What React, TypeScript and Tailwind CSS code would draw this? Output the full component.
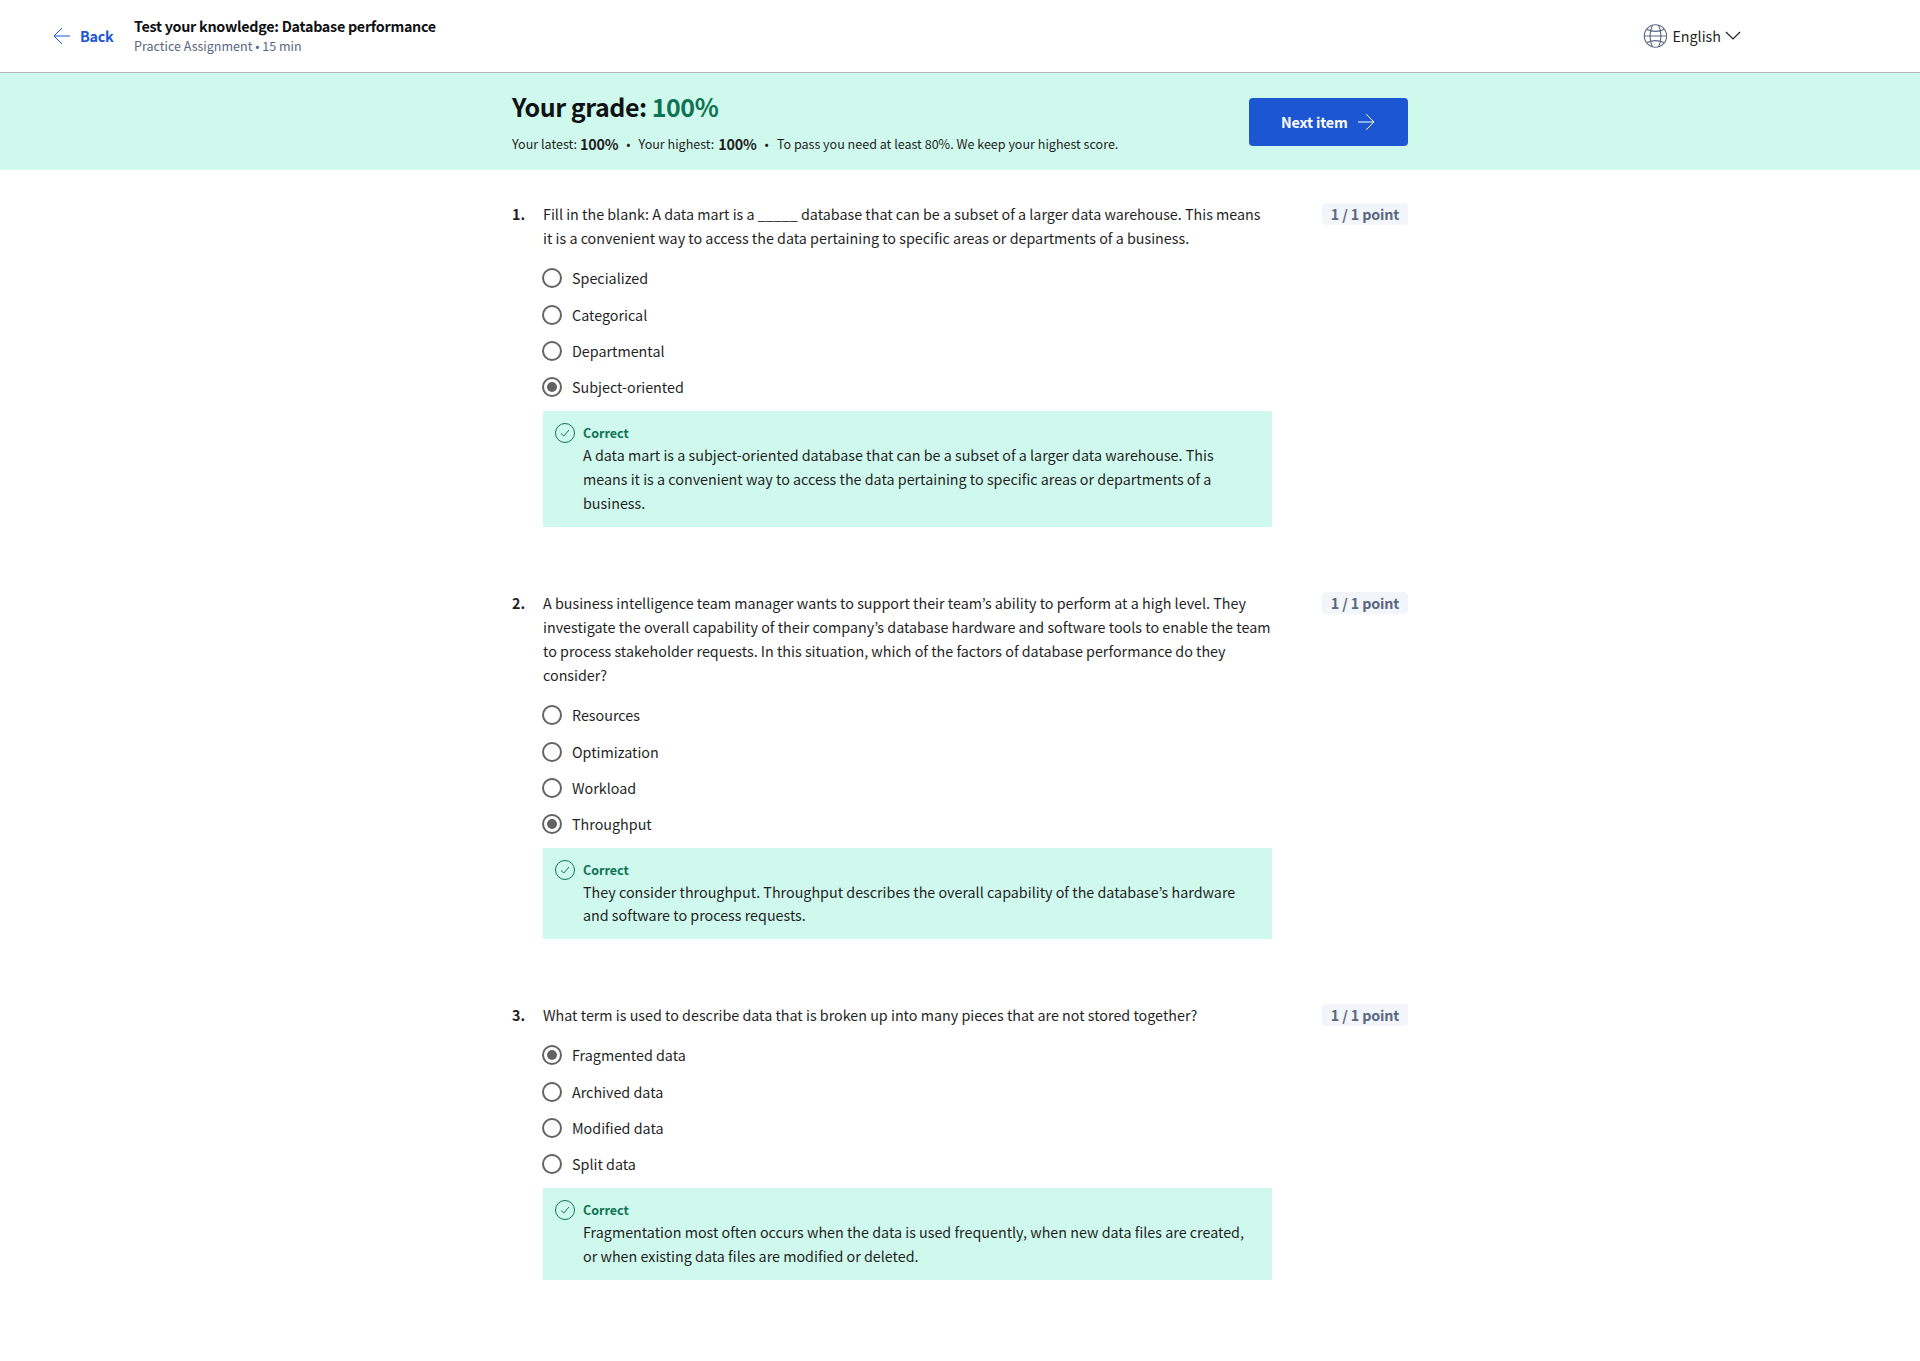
const questions = [
  {
    text: ['Fill in the blank: A data mart is a _____ database that can be a subset of a larger data warehouse. This means', 'it is a convenient way to access the data pertaining to specific areas or departments of a business.'],
    options: ['Specialized', 'Categorical', 'Departmental', 'Subject-oriented'],
    picked: 3,
    feedback: ['A data mart is a subject-oriented database that can be a subset of a larger data warehouse. This', 'means it is a convenient way to access the data pertaining to specific areas or departments of a', 'business.'],
    feedbackHeight: 'h-[116px]',
    feedbackLeading: 'leading-6',
  },
  {
    text: ['A business intelligence team manager wants to support their team’s ability to perform at a high level. They', 'investigate the overall capability of their company’s database hardware and software tools to enable the team', 'to process stakeholder requests. In this situation, which of the factors of database performance do they', 'consider?'],
    options: ['Resources', 'Optimization', 'Workload', 'Throughput'],
    picked: 3,
    feedback: ['They consider throughput. Throughput describes the overall capability of the database’s hardware', 'and software to process requests.'],
    feedbackHeight: 'h-[91px]',
    feedbackLeading: 'leading-[23px]',
  },
  {
    text: ['What term is used to describe data that is broken up into many pieces that are not stored together?'],
    options: ['Fragmented data', 'Archived data', 'Modified data', 'Split data'],
    picked: 0,
    feedback: ['Fragmentation most often occurs when the data is used frequently, when new data files are created,', 'or when existing data files are modified or deleted.'],
    feedbackHeight: 'h-[92px]',
    feedbackLeading: 'leading-6',
  },
];

function Lines({ lines }: { lines: string[] }) {
  return (
    <>
      {lines.map((l) => (
        <p key={l} className="whitespace-nowrap">{l}</p>
      ))}
    </>
  );
}

function Radio({ checked }: { checked: boolean }) {
  return (
    <span className="flex size-5 shrink-0 items-center justify-center rounded-full border-2 border-[#636363]">
      {checked && <span className="size-2.5 rounded-full bg-[#636363]" />}
    </span>
  );
}

export default function App() {
  return (
    <div className="h-[1361px] overflow-hidden bg-white font-['Noto_Sans_CJK_KR',sans-serif] text-[14.32px] leading-6 text-[#1f1f1f]">
      <header className="flex h-[73px] items-center border-b border-[#b5b5b5] pl-[53px] pr-[179px]">
        <svg width="18" height="18" viewBox="0 0 18 18" fill="none" stroke="#1d56d3" className="shrink-0">
          <path d="M9 1L1 9l8 8M1 9h16" />
        </svg>
        <span className="ml-[9px] w-[54px] font-bold tracking-[-0.25px] text-[#1d56d3]">Back</span>
        <div className="flex flex-col">
          <h1 className="h-5 whitespace-nowrap font-bold leading-5 tracking-[-0.27px] text-[#0f1114]">Test your knowledge: Database performance</h1>
          <span className="h-5 whitespace-nowrap text-[12.53px] leading-5 text-[#5b6780]">Practice Assignment • 15 min</span>
        </div>
        <div className="ml-auto flex items-center">
          <svg width="24" height="24" viewBox="0 0 24 24" fill="none" stroke="#5b6780" strokeWidth="1.1">
            <circle cx="12.500" cy="12" r="11.200" />
            <path d="M1.300 12h22.400M9.500 1.200C6.200 7.500 6.200 16.500 9.500 22.800M15.500 1.200c3.300 6.300 3.300 15.300 0 21.600M4 5.500c5 2.200 12 2.200 17 0M4 18.500c5-2.200 12-2.200 17 0" />
          </svg>
          <span className="ml-[5px]">English</span>
          <svg width="16" height="10" viewBox="0 0 16 10" fill="none" stroke="#1f1f1f" strokeWidth="1.2" className="ml-1">
            <path d="M1 1l7 7 7-7" />
          </svg>
        </div>
      </header>

      <section className="flex h-[97px] justify-center bg-[#d0f9ed]">
        <div className="flex w-[896px] items-start justify-between">
          <div className="pt-[15px]">
            <h2 className="h-9 whitespace-nowrap text-[25px] font-bold leading-9 tracking-[-0.47px] text-[#0f1114]">
              Your grade: <span className="text-[#0e7353]">100%</span>
            </h2>
            <div className="mt-2 flex h-6 items-center whitespace-nowrap text-[12.55px]">
              <span>Your latest:</span>
              <span className="ml-[3px] text-[14.32px] font-bold tracking-[-0.2px]">100%</span>
              <span className="mx-2">•</span>
              <span>Your highest:</span>
              <span className="ml-1 text-[14.32px] font-bold tracking-[-0.2px]">100%</span>
              <span className="mx-2">•</span>
              <span>To pass you need at least 80%. We keep your highest score.</span>
            </div>
          </div>
          <button className="mt-[25px] flex h-12 w-[159px] items-center rounded-[4px] bg-[#1d56d3] pl-8 font-bold tracking-[-0.15px] text-white">
            Next item
            <svg width="18" height="18" viewBox="0 0 18 18" fill="none" stroke="white" className="ml-[9px]">
              <path d="M9 1l8 8-8 8M17 9H1" />
            </svg>
          </button>
        </div>
      </section>

      <main className="mx-auto flex w-[896px] flex-col gap-[64px] pt-8">
        {questions.map((q, i) => (
          <article key={i} className="flex items-start">
            <span className="w-[31px] shrink-0 font-bold">{i + 1}.</span>
            <div className="w-[729px] shrink-0">
              <Lines lines={q.text} />
              <div className="flex flex-col gap-4 pb-[14px] pt-[18px]">
                {q.options.map((o, k) => (
                  <label key={o} className="-ml-px flex h-5 items-center gap-[10px] first:mb-px">
                    <Radio checked={k === q.picked} />
                    <span>{o}</span>
                  </label>
                ))}
              </div>
              <div className={`flex items-start bg-[#d0f9ed] p-3 ${q.feedbackHeight} ${q.feedbackLeading}`}>
                <svg width="20" height="20" viewBox="0 0 20 20" fill="none" stroke="#0e7353" className="shrink-0">
                  <circle cx="10" cy="10" r="9.500" />
                  <path d="M6 10.500l2.800 2.500L14 7" />
                </svg>
                <div className="ml-2">
                  <p className="h-5 text-[12.53px] font-bold leading-5 text-[#0e7353]">Correct</p>
                  <Lines lines={q.feedback} />
                </div>
              </div>
            </div>
            <span className="ml-auto mt-px flex h-[22px] w-[86px] items-center justify-center whitespace-nowrap rounded-[4px] bg-[#f2f5fa] font-bold tracking-[-0.15px] text-[#5b6780]">1 / 1 point</span>
          </article>
        ))}
      </main>
    </div>
  );
}
